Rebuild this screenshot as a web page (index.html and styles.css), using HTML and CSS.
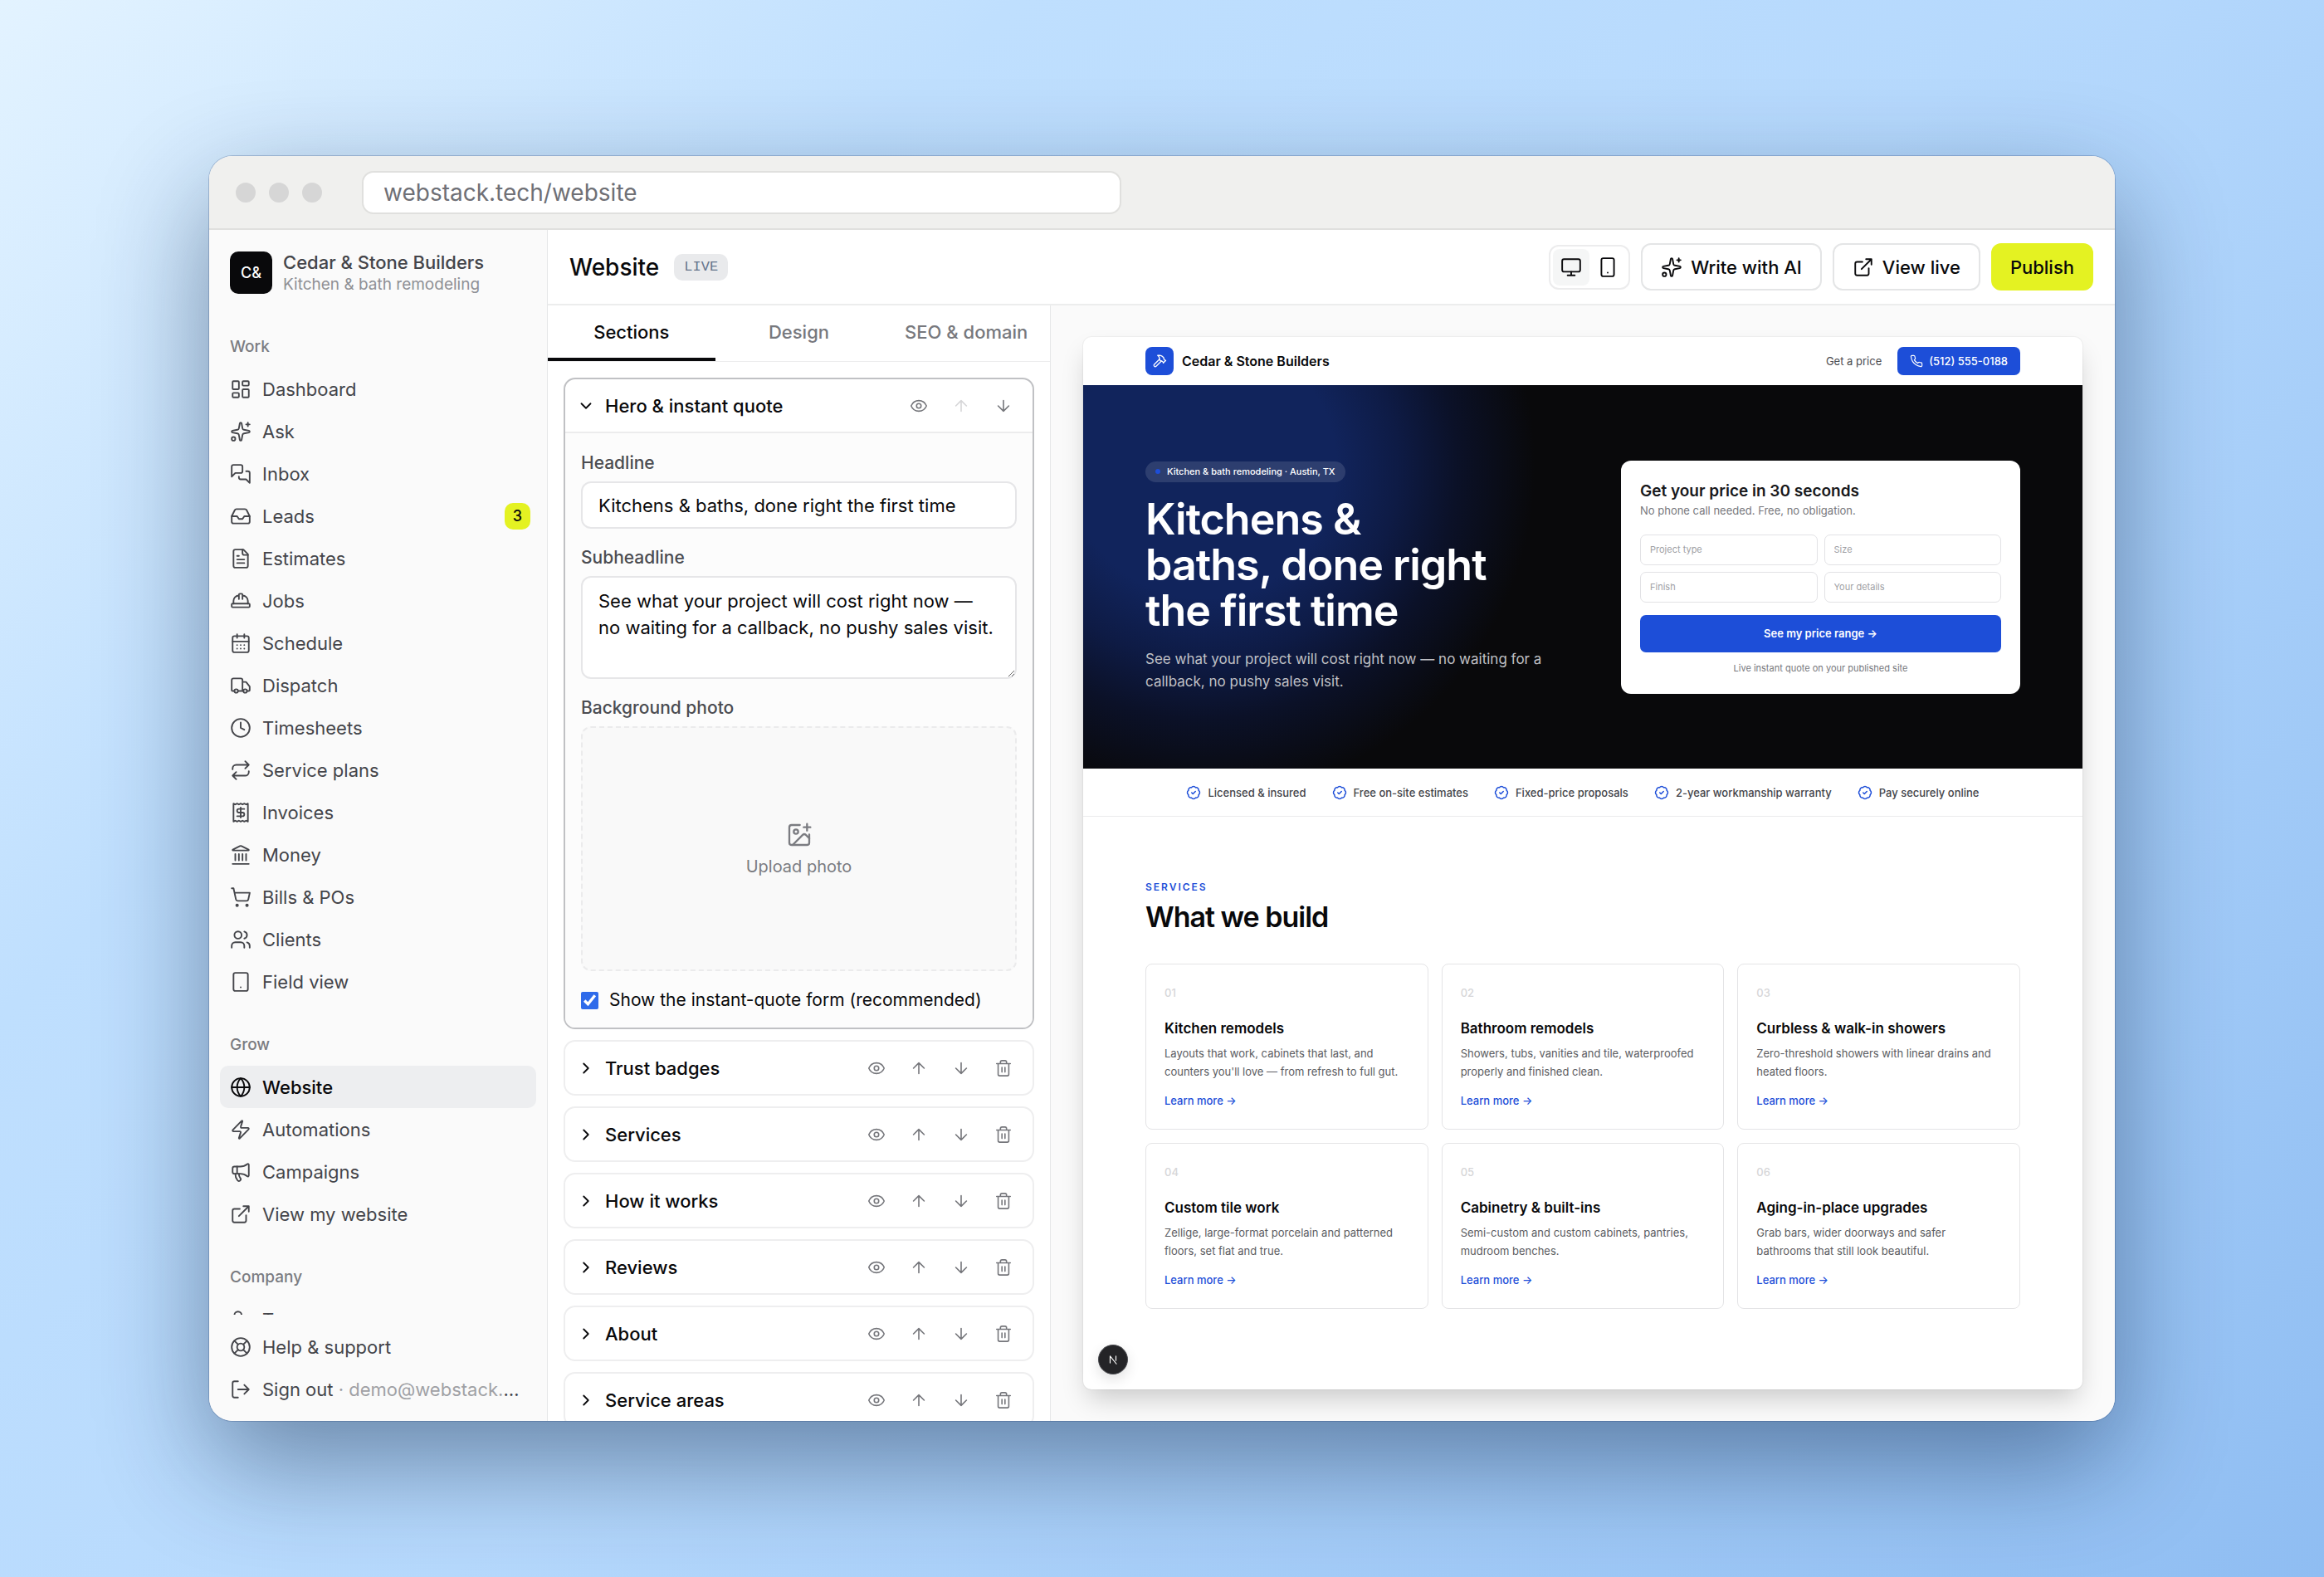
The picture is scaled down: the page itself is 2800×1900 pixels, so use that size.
FILE: index.html
```html
<!DOCTYPE html>
<html lang="en">
<head>
    <meta charset="UTF-8">
    <meta name="viewport" content="width=device-width, initial-scale=1">
    <title>Website - Cedar &amp; Stone Builders</title>
    <link rel="stylesheet" href="styles.css">
</head>
<body>
<!-- icon sprite -->
<svg class="sprite" aria-hidden="true">
    <symbol id="i-dashboard" viewBox="0 0 24 24"><rect x="3" y="3" width="7" height="9" rx="1"/><rect x="14" y="3" width="7" height="5" rx="1"/><rect x="14" y="12" width="7" height="9" rx="1"/><rect x="3" y="16" width="7" height="5" rx="1"/></symbol>
    <symbol id="i-sparkles" viewBox="0 0 24 24"><path d="M11.017 2.814a1 1 0 0 1 1.966 0l1.051 5.558a2 2 0 0 0 1.594 1.594l5.558 1.051a1 1 0 0 1 0 1.966l-5.558 1.051a2 2 0 0 0-1.594 1.594l-1.051 5.558a1 1 0 0 1-1.966 0l-1.051-5.558a2 2 0 0 0-1.594-1.594l-5.558-1.051a1 1 0 0 1 0-1.966l5.558-1.051a2 2 0 0 0 1.594-1.594z"/><path d="M20 2v4M22 4h-4"/><circle cx="4" cy="20" r="2"/></symbol>
    <symbol id="i-messages" viewBox="0 0 24 24"><path d="M14 9a2 2 0 0 1-2 2H6l-4 4V4a2 2 0 0 1 2-2h8a2 2 0 0 1 2 2z"/><path d="M18 9h2a2 2 0 0 1 2 2v11l-4-4h-6a2 2 0 0 1-2-2v-1"/></symbol>
    <symbol id="i-inbox" viewBox="0 0 24 24"><path d="M22 12h-6l-2 3h-4l-2-3H2"/><path d="M5.45 5.11 2 12v6a2 2 0 0 0 2 2h16a2 2 0 0 0 2-2v-6l-3.45-6.89A2 2 0 0 0 16.76 4H7.24a2 2 0 0 0-1.79 1.11z"/></symbol>
    <symbol id="i-file" viewBox="0 0 24 24"><path d="M15 2H6a2 2 0 0 0-2 2v16a2 2 0 0 0 2 2h12a2 2 0 0 0 2-2V7Z"/><path d="M14 2v4a2 2 0 0 0 2 2h4M10 9H8M16 13H8M16 17H8"/></symbol>
    <symbol id="i-hat" viewBox="0 0 24 24"><path d="M10 10V5a1 1 0 0 1 1-1h2a1 1 0 0 1 1 1v5M14 6a6 6 0 0 1 6 6v3M4 15v-3a6 6 0 0 1 6-6"/><rect x="2" y="15" width="20" height="4" rx="1"/></symbol>
    <symbol id="i-calendar" viewBox="0 0 24 24"><path d="M8 2v4M16 2v4"/><rect x="3" y="4" width="18" height="18" rx="2"/><path d="M3 10h18M8 14h.01M12 14h.01M16 14h.01M8 18h.01M12 18h.01M16 18h.01"/></symbol>
    <symbol id="i-truck" viewBox="0 0 24 24"><path d="M14 18V6a2 2 0 0 0-2-2H4a2 2 0 0 0-2 2v11a1 1 0 0 0 1 1h2M15 18H9M19 18h2a1 1 0 0 0 1-1v-3.65a1 1 0 0 0-.22-.624l-3.48-4.35A1 1 0 0 0 17.52 8H14"/><circle cx="17" cy="18" r="2"/><circle cx="7" cy="18" r="2"/></symbol>
    <symbol id="i-clock" viewBox="0 0 24 24"><circle cx="12" cy="12" r="10"/><path d="M12 6v6l4 2"/></symbol>
    <symbol id="i-repeat" viewBox="0 0 24 24"><path d="m17 2 4 4-4 4M3 11v-1a4 4 0 0 1 4-4h14M7 22l-4-4 4-4M21 13v1a4 4 0 0 1-4 4H3"/></symbol>
    <symbol id="i-receipt" viewBox="0 0 24 24"><path d="M4 2v20l2-1 2 1 2-1 2 1 2-1 2 1 2-1 2 1V2l-2 1-2-1-2 1-2-1-2 1-2-1-2 1Z"/><path d="M16 8h-6a2 2 0 1 0 0 4h4a2 2 0 1 1 0 4H8M12 17.5v-11"/></symbol>
    <symbol id="i-bank" viewBox="0 0 24 24"><path d="M11.12 2.198a2 2 0 0 1 1.76.006l7.866 3.847c.476.233.31.949-.22.949H3.474c-.53 0-.695-.716-.22-.949z"/><path d="M6 18v-7M10 18v-7M14 18v-7M18 18v-7M3 22h18"/></symbol>
    <symbol id="i-cart" viewBox="0 0 24 24"><circle cx="8" cy="21" r="1"/><circle cx="19" cy="21" r="1"/><path d="M2.05 2.05h2l2.66 12.42a2 2 0 0 0 2 1.58h9.78a2 2 0 0 0 1.95-1.57l1.65-7.43H5.12"/></symbol>
    <symbol id="i-users" viewBox="0 0 24 24"><path d="M16 21v-2a4 4 0 0 0-4-4H6a4 4 0 0 0-4 4v2"/><circle cx="9" cy="7" r="4"/><path d="M22 21v-2a4 4 0 0 0-3-3.87M16 3.13a4 4 0 0 1 0 7.75"/></symbol>
    <symbol id="i-user" viewBox="0 0 24 24"><path d="M16 21v-2a4 4 0 0 0-4-4H6a4 4 0 0 0-4 4v2"/><circle cx="9" cy="7" r="4"/></symbol>
    <symbol id="i-tablet" viewBox="0 0 24 24"><rect x="4" y="2" width="16" height="20" rx="2"/><path d="M12 18h.01"/></symbol>
    <symbol id="i-phone-device" viewBox="0 0 24 24"><rect x="5" y="2" width="14" height="20" rx="2"/><path d="M12 18h.01"/></symbol>
    <symbol id="i-monitor" viewBox="0 0 24 24"><rect x="2" y="3" width="20" height="14" rx="2"/><path d="M8 21h8M12 17v4"/></symbol>
    <symbol id="i-globe" viewBox="0 0 24 24"><circle cx="12" cy="12" r="10"/><path d="M12 2a14.5 14.5 0 0 0 0 20 14.5 14.5 0 0 0 0-20M2 12h20"/></symbol>
    <symbol id="i-zap" viewBox="0 0 24 24"><path d="M4 14a1 1 0 0 1-.78-1.63l9.9-10.2a.5.5 0 0 1 .86.46l-1.92 6.02A1 1 0 0 0 13 10h7a1 1 0 0 1 .78 1.63l-9.9 10.2a.5.5 0 0 1-.86-.46l1.92-6.02A1 1 0 0 0 11 14z"/></symbol>
    <symbol id="i-megaphone" viewBox="0 0 24 24"><path d="M11 6a13 13 0 0 0 8.4-2.8A1 1 0 0 1 21 4v12a1 1 0 0 1-1.6.8A13 13 0 0 0 11 14H5a2 2 0 0 1-2-2V8a2 2 0 0 1 2-2z"/><path d="M6 14a12 12 0 0 0 2.4 7.2 2 2 0 0 0 3.2-2.4A8 8 0 0 1 10 14M8 6v8"/></symbol>
    <symbol id="i-external" viewBox="0 0 24 24"><path d="M15 3h6v6M10 14 21 3M18 13v6a2 2 0 0 1-2 2H5a2 2 0 0 1-2-2V8a2 2 0 0 1 2-2h6"/></symbol>
    <symbol id="i-help" viewBox="0 0 24 24"><circle cx="12" cy="12" r="10"/><path d="m4.93 4.93 4.24 4.24M14.83 9.17l4.24-4.24M14.83 14.83l4.24 4.24M9.17 14.83l-4.24 4.24"/><circle cx="12" cy="12" r="4"/></symbol>
    <symbol id="i-logout" viewBox="0 0 24 24"><path d="m16 17 5-5-5-5M21 12H9M9 21H5a2 2 0 0 1-2-2V5a2 2 0 0 1 2-2h4"/></symbol>
    <symbol id="i-eye" viewBox="0 0 24 24"><path d="M2.062 12.348a1 1 0 0 1 0-.696 10.75 10.75 0 0 1 19.876 0 1 1 0 0 1 0 .696 10.75 10.75 0 0 1-19.876 0"/><circle cx="12" cy="12" r="3"/></symbol>
    <symbol id="i-up" viewBox="0 0 24 24"><path d="m5 12 7-7 7 7M12 19V5"/></symbol>
    <symbol id="i-down" viewBox="0 0 24 24"><path d="M12 5v14M19 12l-7 7-7-7"/></symbol>
    <symbol id="i-trash" viewBox="0 0 24 24"><path d="M3 6h18M19 6v14a2 2 0 0 1-2 2H7a2 2 0 0 1-2-2V6M8 6V4a2 2 0 0 1 2-2h4a2 2 0 0 1 2 2v2M10 11v6M14 11v6"/></symbol>
    <symbol id="i-chevron-down" viewBox="0 0 24 24"><path d="m6 9 6 6 6-6"/></symbol>
    <symbol id="i-chevron-right" viewBox="0 0 24 24"><path d="m9 18 6-6-6-6"/></symbol>
    <symbol id="i-image-plus" viewBox="0 0 24 24"><path d="M16 5h6M19 2v6M21 11.5V19a2 2 0 0 1-2 2H5a2 2 0 0 1-2-2V5a2 2 0 0 1 2-2h7.5"/><path d="m21 15-3.086-3.086a2 2 0 0 0-2.828 0L6 21"/><circle cx="9" cy="9" r="2"/></symbol>
    <symbol id="i-hammer" viewBox="0 0 24 24"><path d="m15 12-8.373 8.373a1 1 0 1 1-3-3L12 9M18 15l4-4"/><path d="m21.5 11.5-1.914-1.914A2 2 0 0 1 19 8.172V7l-2.26-2.26a6 6 0 0 0-4.202-1.756L9 2.96l.92.82A6.18 6.18 0 0 1 12 8.4V10l2 2h1.172a2 2 0 0 1 1.414.586L18.5 14.5"/></symbol>
    <symbol id="i-call" viewBox="0 0 24 24"><path d="M22 16.92v3a2 2 0 0 1-2.18 2 19.79 19.79 0 0 1-8.63-3.07 19.5 19.5 0 0 1-6-6 19.79 19.79 0 0 1-3.07-8.67A2 2 0 0 1 4.11 2h3a2 2 0 0 1 2 1.72 12.84 12.84 0 0 0 .7 2.81 2 2 0 0 1-.45 2.11L8.09 9.91a16 16 0 0 0 6 6l1.27-1.27a2 2 0 0 1 2.11-.45 12.84 12.84 0 0 0 2.81.7A2 2 0 0 1 22 16.92z"/></symbol>
    <symbol id="i-badge-check" viewBox="0 0 24 24"><path d="M3.85 8.62a4 4 0 0 1 4.78-4.77 4 4 0 0 1 6.74 0 4 4 0 0 1 4.78 4.78 4 4 0 0 1 0 6.74 4 4 0 0 1-4.77 4.78 4 4 0 0 1-6.75 0 4 4 0 0 1-4.78-4.77 4 4 0 0 1 0-6.76Z"/><path d="m9 12 2 2 4-4"/></symbol>
</svg>

<div class="browser">
    <div class="browser-bar">
        <div class="dots"><span></span><span></span><span></span></div>
        <input class="address" type="text" value="webstack.tech/website" aria-label="Address">
    </div>

    <div class="app">
        <aside class="sidebar">
            <div class="account">
                <div class="avatar">C&amp;</div>
                <div class="account-text">
                    <div class="account-name">Cedar &amp; Stone Builders</div>
                    <div class="account-sub">Kitchen &amp; bath remodeling</div>
                </div>
            </div>

            <nav class="nav">
                <div class="nav-group">
                    <div class="nav-label">Work</div>
                    <a class="nav-item" href="#"><svg class="icon"><use href="#i-dashboard"/></svg>Dashboard</a>
                    <a class="nav-item" href="#"><svg class="icon"><use href="#i-sparkles"/></svg>Ask</a>
                    <a class="nav-item" href="#"><svg class="icon"><use href="#i-messages"/></svg>Inbox</a>
                    <a class="nav-item" href="#"><svg class="icon"><use href="#i-inbox"/></svg>Leads<span class="count">3</span></a>
                    <a class="nav-item" href="#"><svg class="icon"><use href="#i-file"/></svg>Estimates</a>
                    <a class="nav-item" href="#"><svg class="icon"><use href="#i-hat"/></svg>Jobs</a>
                    <a class="nav-item" href="#"><svg class="icon"><use href="#i-calendar"/></svg>Schedule</a>
                    <a class="nav-item" href="#"><svg class="icon"><use href="#i-truck"/></svg>Dispatch</a>
                    <a class="nav-item" href="#"><svg class="icon"><use href="#i-clock"/></svg>Timesheets</a>
                    <a class="nav-item" href="#"><svg class="icon"><use href="#i-repeat"/></svg>Service plans</a>
                    <a class="nav-item" href="#"><svg class="icon"><use href="#i-receipt"/></svg>Invoices</a>
                    <a class="nav-item" href="#"><svg class="icon"><use href="#i-bank"/></svg>Money</a>
                    <a class="nav-item" href="#"><svg class="icon"><use href="#i-cart"/></svg>Bills &amp; POs</a>
                    <a class="nav-item" href="#"><svg class="icon"><use href="#i-users"/></svg>Clients</a>
                    <a class="nav-item" href="#"><svg class="icon"><use href="#i-tablet"/></svg>Field view</a>
                </div>
                <div class="nav-group">
                    <div class="nav-label">Grow</div>
                    <a class="nav-item active" href="#"><svg class="icon"><use href="#i-globe"/></svg>Website</a>
                    <a class="nav-item" href="#"><svg class="icon"><use href="#i-zap"/></svg>Automations</a>
                    <a class="nav-item" href="#"><svg class="icon"><use href="#i-megaphone"/></svg>Campaigns</a>
                    <a class="nav-item" href="#"><svg class="icon"><use href="#i-external"/></svg>View my website</a>
                </div>
                <div class="nav-group">
                    <div class="nav-label">Company</div>
                    <a class="nav-item" href="#"><svg class="icon"><use href="#i-user"/></svg>Team</a>
                </div>
            </nav>

            <div class="nav-footer">
                <a class="nav-item" href="#"><svg class="icon"><use href="#i-help"/></svg>Help &amp; support</a>
                <button class="nav-item" type="button"><svg class="icon"><use href="#i-logout"/></svg><span class="sign-out">Sign out <span class="muted">· demo@webstack.tech</span></span></button>
            </div>
        </aside>

        <main class="main">
            <header class="topbar">
                <h1 class="title">Website</h1>
                <span class="status">LIVE</span>
                <div class="actions">
                    <div class="devices">
                        <button class="device on" type="button" aria-label="Desktop"><svg class="icon"><use href="#i-monitor"/></svg></button>
                        <button class="device" type="button" aria-label="Mobile"><svg class="icon"><use href="#i-phone-device"/></svg></button>
                    </div>
                    <button class="btn" type="button"><svg class="icon"><use href="#i-sparkles"/></svg>Write with AI</button>
                    <a class="btn" href="#"><svg class="icon"><use href="#i-external"/></svg>View live</a>
                    <button class="btn btn-primary" type="button">Publish</button>
                </div>
            </header>

            <div class="workspace">
                <section class="editor">
                    <div class="tabs">
                        <button class="tab on" type="button">Sections</button>
                        <button class="tab" type="button">Design</button>
                        <button class="tab" type="button">SEO &amp; domain</button>
                    </div>
                    <div class="sections">
                        <div class="section open">
                            <div class="section-head">
                                <button class="section-toggle" type="button"><svg class="icon-sm"><use href="#i-chevron-down"/></svg>Hero &amp; instant quote</button>
                                <button class="tool" type="button" aria-label="Hide"><svg class="icon-sm"><use href="#i-eye"/></svg></button>
                                <button class="tool" type="button" aria-label="Move up" disabled><svg class="icon-sm"><use href="#i-up"/></svg></button>
                                <button class="tool" type="button" aria-label="Move down"><svg class="icon-sm"><use href="#i-down"/></svg></button>
                            </div>
                            <div class="section-body">
                                <label class="label" for="headline">Headline</label>
                                <input class="field" id="headline" type="text" value="Kitchens &amp; baths, done right the first time">
                                <label class="label" for="subheadline">Subheadline</label>
                                <textarea class="field area" id="subheadline">See what your project will cost right now — no waiting for a callback, no pushy sales visit.</textarea>
                                <div class="label">Background photo</div>
                                <button class="upload" type="button"><svg class="icon-lg"><use href="#i-image-plus"/></svg>Upload photo</button>
                                <label class="check"><input type="checkbox" checked>Show the instant-quote form (recommended)</label>
                            </div>
                        </div>
                        <div class="section">
                            <div class="section-head">
                                <button class="section-toggle" type="button"><svg class="icon-sm"><use href="#i-chevron-right"/></svg>Trust badges</button>
                                <button class="tool" type="button" aria-label="Hide"><svg class="icon-sm"><use href="#i-eye"/></svg></button>
                                <button class="tool" type="button" aria-label="Move up"><svg class="icon-sm"><use href="#i-up"/></svg></button>
                                <button class="tool" type="button" aria-label="Move down"><svg class="icon-sm"><use href="#i-down"/></svg></button>
                                <button class="tool" type="button" aria-label="Delete"><svg class="icon-sm"><use href="#i-trash"/></svg></button>
                            </div>
                        </div>
                        <div class="section">
                            <div class="section-head">
                                <button class="section-toggle" type="button"><svg class="icon-sm"><use href="#i-chevron-right"/></svg>Services</button>
                                <button class="tool" type="button" aria-label="Hide"><svg class="icon-sm"><use href="#i-eye"/></svg></button>
                                <button class="tool" type="button" aria-label="Move up"><svg class="icon-sm"><use href="#i-up"/></svg></button>
                                <button class="tool" type="button" aria-label="Move down"><svg class="icon-sm"><use href="#i-down"/></svg></button>
                                <button class="tool" type="button" aria-label="Delete"><svg class="icon-sm"><use href="#i-trash"/></svg></button>
                            </div>
                        </div>
                        <div class="section">
                            <div class="section-head">
                                <button class="section-toggle" type="button"><svg class="icon-sm"><use href="#i-chevron-right"/></svg>How it works</button>
                                <button class="tool" type="button" aria-label="Hide"><svg class="icon-sm"><use href="#i-eye"/></svg></button>
                                <button class="tool" type="button" aria-label="Move up"><svg class="icon-sm"><use href="#i-up"/></svg></button>
                                <button class="tool" type="button" aria-label="Move down"><svg class="icon-sm"><use href="#i-down"/></svg></button>
                                <button class="tool" type="button" aria-label="Delete"><svg class="icon-sm"><use href="#i-trash"/></svg></button>
                            </div>
                        </div>
                        <div class="section">
                            <div class="section-head">
                                <button class="section-toggle" type="button"><svg class="icon-sm"><use href="#i-chevron-right"/></svg>Reviews</button>
                                <button class="tool" type="button" aria-label="Hide"><svg class="icon-sm"><use href="#i-eye"/></svg></button>
                                <button class="tool" type="button" aria-label="Move up"><svg class="icon-sm"><use href="#i-up"/></svg></button>
                                <button class="tool" type="button" aria-label="Move down"><svg class="icon-sm"><use href="#i-down"/></svg></button>
                                <button class="tool" type="button" aria-label="Delete"><svg class="icon-sm"><use href="#i-trash"/></svg></button>
                            </div>
                        </div>
                        <div class="section">
                            <div class="section-head">
                                <button class="section-toggle" type="button"><svg class="icon-sm"><use href="#i-chevron-right"/></svg>About</button>
                                <button class="tool" type="button" aria-label="Hide"><svg class="icon-sm"><use href="#i-eye"/></svg></button>
                                <button class="tool" type="button" aria-label="Move up"><svg class="icon-sm"><use href="#i-up"/></svg></button>
                                <button class="tool" type="button" aria-label="Move down"><svg class="icon-sm"><use href="#i-down"/></svg></button>
                                <button class="tool" type="button" aria-label="Delete"><svg class="icon-sm"><use href="#i-trash"/></svg></button>
                            </div>
                        </div>
                        <div class="section">
                            <div class="section-head">
                                <button class="section-toggle" type="button"><svg class="icon-sm"><use href="#i-chevron-right"/></svg>Service areas</button>
                                <button class="tool" type="button" aria-label="Hide"><svg class="icon-sm"><use href="#i-eye"/></svg></button>
                                <button class="tool" type="button" aria-label="Move up"><svg class="icon-sm"><use href="#i-up"/></svg></button>
                                <button class="tool" type="button" aria-label="Move down"><svg class="icon-sm"><use href="#i-down"/></svg></button>
                                <button class="tool" type="button" aria-label="Delete"><svg class="icon-sm"><use href="#i-trash"/></svg></button>
                            </div>
                        </div>
                    </div>
                </section>

                <section class="preview">
                    <div class="site">
                        <div class="site-head">
                            <div class="site-logo"><svg><use href="#i-hammer"/></svg></div>
                            <div class="site-name">Cedar &amp; Stone Builders</div>
                            <a class="site-link" href="#">Get a price</a>
                            <a class="site-call" href="#"><svg><use href="#i-call"/></svg>(512) 555-0188</a>
                        </div>

                        <div class="hero">
                            <div class="hero-text">
                                <div class="pill"><span class="pill-dot"></span>Kitchen &amp; bath remodeling · Austin, TX</div>
                                <h2 class="hero-title">Kitchens &amp;<br>baths, done right<br>the first time</h2>
                                <p class="hero-sub">See what your project will cost right now — no waiting for a callback, no pushy sales visit.</p>
                            </div>
                            <form class="quote">
                                <h3 class="quote-title">Get your price in 30 seconds</h3>
                                <p class="quote-sub">No phone call needed. Free, no obligation.</p>
                                <div class="quote-grid">
                                    <input type="text" placeholder="Project type" aria-label="Project type">
                                    <input type="text" placeholder="Size" aria-label="Size">
                                    <input type="text" placeholder="Finish" aria-label="Finish">
                                    <input type="text" placeholder="Your details" aria-label="Your details">
                                </div>
                                <button class="quote-btn" type="button">See my price range →</button>
                                <p class="quote-note">Live instant quote on your published site</p>
                            </form>
                        </div>

                        <ul class="trust">
                            <li><svg><use href="#i-badge-check"/></svg>Licensed &amp; insured</li>
                            <li><svg><use href="#i-badge-check"/></svg>Free on-site estimates</li>
                            <li><svg><use href="#i-badge-check"/></svg>Fixed-price proposals</li>
                            <li><svg><use href="#i-badge-check"/></svg>2-year workmanship warranty</li>
                            <li><svg><use href="#i-badge-check"/></svg>Pay securely online</li>
                        </ul>

                        <div class="services">
                            <div class="eyebrow">SERVICES</div>
                            <h2 class="services-title">What we build</h2>
                            <div class="cards">
                                <article class="card">
                                    <div class="card-num">01</div>
                                    <h3>Kitchen remodels</h3>
                                    <p>Layouts that work, cabinets that last, and counters you'll love — from refresh to full gut.</p>
                                    <a href="#">Learn more →</a>
                                </article>
                                <article class="card">
                                    <div class="card-num">02</div>
                                    <h3>Bathroom remodels</h3>
                                    <p>Showers, tubs, vanities and tile, waterproofed properly and finished clean.</p>
                                    <a href="#">Learn more →</a>
                                </article>
                                <article class="card">
                                    <div class="card-num">03</div>
                                    <h3>Curbless &amp; walk-in showers</h3>
                                    <p>Zero-threshold showers with linear drains and heated floors.</p>
                                    <a href="#">Learn more →</a>
                                </article>
                                <article class="card">
                                    <div class="card-num">04</div>
                                    <h3>Custom tile work</h3>
                                    <p>Zellige, large-format porcelain and patterned floors, set flat and true.</p>
                                    <a href="#">Learn more →</a>
                                </article>
                                <article class="card">
                                    <div class="card-num">05</div>
                                    <h3>Cabinetry &amp; built-ins</h3>
                                    <p>Semi-custom and custom cabinets, pantries, mudroom benches.</p>
                                    <a href="#">Learn more →</a>
                                </article>
                                <article class="card">
                                    <div class="card-num">06</div>
                                    <h3>Aging-in-place upgrades</h3>
                                    <p>Grab bars, wider doorways and safer bathrooms that still look beautiful.</p>
                                    <a href="#">Learn more →</a>
                                </article>
                            </div>
                        </div>
                        <button class="dev-badge" type="button" aria-label="Dev tools"><svg viewBox="0 0 24 24"><path d="M6 19V5l13 16M18 5v9"/></svg></button>
                    </div>
                </section>
            </div>
        </main>
    </div>
</div>
</body>
</html>
```
FILE: styles.css
```css
* {
    margin: 0;
    padding: 0;
    box-sizing: border-box;
}
body {
    display: flex;
    height: 100vh;
    padding: 188px 9%;
    background: linear-gradient(135deg, #e3f3ff 0%, #bfdffe 26%, #b6d9fd 52%, #8fbdf2 100%);
    font-family: Inter, "Liberation Sans", sans-serif;
    font-size: 22px;
    color: #09090b;
}
a {
    color: inherit;
    text-decoration: none;
}
button, input, textarea {
    font: inherit;
    color: inherit;
}
button {
    border: 0;
    background: none;
    cursor: pointer;
}
ul {
    list-style: none;
}
svg {
    flex: none;
    fill: none;
    stroke: currentColor;
    stroke-width: 1.75;
    stroke-linecap: round;
    stroke-linejoin: round;
}
.sprite {
    display: none;
}
.icon {
    width: 26px;
    height: 26px;
}
.icon-sm {
    width: 22px;
    height: 22px;
}
.icon-lg {
    width: 32px;
    height: 32px;
}

/* browser window */
.browser {
    flex: 1;
    display: flex;
    flex-direction: column;
    min-width: 0;
    border-radius: 28px;
    background: #fff;
    overflow: hidden;
    box-shadow: 0 0 0 1px rgba(30, 60, 110, .25), 0 50px 130px rgba(10, 35, 70, .46);
}
.browser-bar {
    flex: none;
    display: flex;
    align-items: center;
    gap: 48px;
    height: 89px;
    padding: 0 32px;
    background: #f0f0ee;
    border-bottom: 2px solid #e0e0de;
}
.dots {
    display: flex;
    gap: 16px;
}
.dots span {
    width: 24px;
    height: 24px;
    border-radius: 50%;
    background: #d6d6d6;
}
.address {
    width: 41%;
    height: 52px;
    padding: 0 24px;
    border: 2px solid #e0e0de;
    border-radius: 14px;
    background: #fff;
    color: #6f7076;
    font-size: 28px;
}
.app {
    flex: 1;
    display: flex;
    min-height: 0;
}

/* sidebar */
.sidebar {
    flex: none;
    display: flex;
    flex-direction: column;
    width: 408px;
    border-right: 1px solid #e6e7e8;
    background: #fafafa;
    color: #44454a;
}
.account {
    display: flex;
    align-items: center;
    gap: 13px;
    padding: 25px 25px 37px;
}
.avatar {
    width: 51px;
    height: 51px;
    border-radius: 10px;
    background: #09090b;
    color: #fff;
    font-size: 18px;
    font-weight: 500;
    line-height: 51px;
    text-align: center;
}
.account-name {
    font-weight: 500;
    line-height: 28px;
}
.account-sub {
    font-size: 19px;
    line-height: 25px;
    color: #8f9095;
}
.nav {
    flex: 1;
    display: flex;
    flex-direction: column;
    gap: 25px;
    min-height: 0;
    padding: 0 13px;
    overflow: hidden;
}
.nav-label {
    padding: 0 12px;
    font-size: 19px;
    font-weight: 500;
    line-height: 51px;
    color: #7b7c81;
}
.nav-item {
    display: flex;
    align-items: center;
    gap: 13px;
    width: 100%;
    height: 51px;
    padding: 0 16px 0 12px;
    border-radius: 10px;
    text-align: left;
}
.nav-item.active {
    background: #edeef0;
    color: #09090b;
    font-weight: 500;
}
.count {
    min-width: 31px;
    margin-left: auto;
    margin-right: -9px;
    border-radius: 10px;
    background: #e4f222;
    color: #09090b;
    font-size: 18px;
    font-weight: 500;
    line-height: 32px;
    text-align: center;
}
.nav-footer {
    padding: 13px;
}
.sign-out {
    overflow: hidden;
    text-overflow: ellipsis;
    white-space: nowrap;
}
.muted {
    color: #a0a1a5;
}

/* top bar */
.main {
    flex: 1;
    display: flex;
    flex-direction: column;
    min-width: 0;
}
.topbar {
    flex: none;
    display: flex;
    align-items: center;
    gap: 18px;
    height: 91px;
    padding: 0 26px;
    border-bottom: 2px solid #eceded;
}
.title {
    font-size: 28px;
    font-weight: 500;
}
.status {
    padding: 0 12px;
    border-radius: 10px;
    background: #e9eaec;
    color: #64748b;
    font-family: "Liberation Mono", monospace;
    font-size: 17px;
    line-height: 32px;
}
.actions {
    display: flex;
    align-items: center;
    gap: 13px;
    margin-left: auto;
}
.devices {
    display: flex;
    padding: 3px;
    border: 2px solid #ececed;
    border-radius: 12px;
}
.device {
    display: flex;
    align-items: center;
    justify-content: center;
    width: 44px;
    height: 44px;
    border-radius: 8px;
}
.device.on {
    background: #f5f6f6;
}
.btn {
    display: flex;
    align-items: center;
    gap: 10px;
    height: 57px;
    padding: 0 22px;
    border: 2px solid #e4e5e6;
    border-radius: 12px;
    font-weight: 500;
}
.btn-primary {
    padding: 0 21px;
    border-color: #e4f222;
    background: #e4f222;
}

/* editor */
.workspace {
    flex: 1;
    display: flex;
    min-height: 0;
}
.editor {
    flex: none;
    display: flex;
    flex-direction: column;
    width: 606px;
    border-right: 1px solid #e6e7e8;
    overflow: hidden;
}
.tabs {
    flex: none;
    display: flex;
    height: 68px;
    border-bottom: 1px solid #ececed;
}
.tab {
    flex: 1;
    border-bottom: 4px solid transparent;
    color: #77787d;
    font-weight: 500;
    white-space: nowrap;
}
.tab.on {
    border-color: #09090b;
    color: #09090b;
}
.sections {
    display: flex;
    flex-direction: column;
    gap: 13px;
    padding: 19px;
}
.section {
    flex: none;
    border: 2px solid #eeeeef;
    border-radius: 14px;
    overflow: hidden;
}
.section.open {
    border-color: #c0c1c4;
}
.section-head {
    display: flex;
    align-items: center;
    gap: 6px;
    height: 63px;
    padding: 0 13px 0 14px;
}
.section-toggle {
    flex: 1;
    display: flex;
    align-items: center;
    gap: 12px;
    font-weight: 500;
    text-align: left;
}
.section-toggle svg {
    stroke-width: 2;
}
.tool {
    display: flex;
    align-items: center;
    justify-content: center;
    width: 45px;
    height: 45px;
    color: #75767b;
}
.tool:disabled {
    color: #d6d6d8;
}
.section-body {
    display: flex;
    flex-direction: column;
    padding: 20px 19px 17px;
    border-top: 2px solid #ececed;
    background: #fcfcfc;
}
.label {
    margin-bottom: 6px;
    font-size: 21px;
    font-weight: 500;
    line-height: 32px;
    color: #4b4c51;
}
.field {
    height: 57px;
    margin-bottom: 19px;
    padding: 0 19px;
    border: 2px solid #e6e6e8;
    border-radius: 12px;
    background: #fff;
}
.area {
    height: 124px;
    padding: 12px 24px 12px 19px;
    line-height: 32px;
    resize: vertical;
}
.upload {
    display: flex;
    flex-direction: column;
    align-items: center;
    justify-content: center;
    gap: 10px;
    aspect-ratio: 16 / 9;
    border: 2px dashed #ebebec;
    border-radius: 12px;
    background: #f9f9f9;
    color: #7b7c81;
    font-size: 20px;
}
.check {
    display: flex;
    align-items: center;
    gap: 13px;
    padding: 19px 0 0;
    font-size: 21px;
    line-height: 32px;
}
.check input {
    width: 21px;
    height: 21px;
    accent-color: #2f6bea;
}

/* site preview */
.preview {
    flex: 1;
    display: flex;
    min-width: 0;
    padding: 38px 39px;
    background: #fafafa;
}
.site {
    position: relative;
    flex: 1;
    min-width: 0;
    border-radius: 10px;
    background: #fff;
    overflow: hidden;
    box-shadow: 0 0 0 1px rgba(0, 0, 0, .04), 0 16px 32px -6px rgba(0, 0, 0, .2);
}
.site-head {
    display: flex;
    align-items: center;
    height: 58px;
    padding: 0 75px;
}
.site-logo {
    display: flex;
    align-items: center;
    justify-content: center;
    width: 34px;
    height: 34px;
    border-radius: 8px;
    background: #1d4ed8;
    color: #fff;
}
.site-logo svg {
    width: 18px;
    height: 18px;
}
.site-name {
    margin-left: 10px;
    font-size: 16px;
    font-weight: 600;
}
.site-link {
    margin-left: auto;
    font-size: 13px;
    color: #4b4c51;
}
.site-call {
    display: flex;
    align-items: center;
    gap: 7px;
    height: 34px;
    margin-left: 19px;
    padding: 0 15px;
    border-radius: 7px;
    background: #1d4ed8;
    color: #fff;
    font-size: 13px;
    font-weight: 500;
}
.site-call svg {
    width: 16px;
    height: 16px;
}
.hero {
    display: flex;
    align-items: center;
    justify-content: space-between;
    height: 462px;
    padding: 0 75px;
    background: radial-gradient(circle at 12% 21%, #11245c 0, #11245c 160px, #0e1b45 235px, #0b1128 305px, #09090b 400px);
    color: #fff;
}
.pill {
    display: flex;
    align-items: center;
    gap: 8px;
    width: fit-content;
    padding: 0 12px;
    border-radius: 13px;
    background: rgba(255, 255, 255, .12);
    font-size: 11px;
    font-weight: 500;
    line-height: 25px;
}
.pill-dot {
    width: 6px;
    height: 6px;
    border-radius: 50%;
    background: #1d4ed8;
}
.hero-title {
    margin-top: 17px;
    font-size: 52px;
    font-weight: 600;
    line-height: 55px;
    letter-spacing: -1px;
}
.hero-sub {
    max-width: 480px;
    margin-top: 18px;
    color: #c0c1c6;
    font-size: 17px;
    line-height: 27px;
}
.quote {
    width: 481px;
    padding: 23px 23px 22px;
    border-radius: 12px;
    background: #fff;
    color: #18181b;
}
.quote-title {
    font-size: 19px;
    font-weight: 600;
    line-height: 27px;
}
.quote-sub {
    margin-bottom: 18px;
    font-size: 13px;
    line-height: 21px;
    color: #77787d;
}
.quote-grid {
    display: grid;
    grid-template-columns: 1fr 1fr;
    gap: 8px;
}
.quote-grid input {
    min-width: 0;
    height: 37px;
    padding: 0 11px;
    border: 1px solid #e2e2e5;
    border-radius: 7px;
    font-size: 11px;
}
.quote-grid input::placeholder {
    color: #a0a1a5;
}
.quote-btn {
    display: block;
    width: 100%;
    height: 45px;
    margin-top: 15px;
    border-radius: 7px;
    background: #1d4ed8;
    color: #fff;
    font-size: 13px;
    font-weight: 600;
}
.quote-note {
    margin-top: 10px;
    font-size: 11px;
    line-height: 18px;
    color: #77787d;
    text-align: center;
}
.trust {
    display: flex;
    align-items: center;
    justify-content: center;
    gap: 31px;
    height: 58px;
    border-bottom: 1px solid #ececed;
    color: #44454a;
    font-size: 13px;
    font-weight: 500;
}
.trust li {
    display: flex;
    align-items: center;
    gap: 8px;
}
.trust svg {
    width: 18px;
    height: 18px;
    color: #1d4ed8;
    stroke-width: 2;
}
.services {
    padding: 75px 75px 0;
}
.eyebrow {
    font-size: 12px;
    font-weight: 600;
    line-height: 20px;
    letter-spacing: 2px;
    color: #1d4ed8;
}
.services-title {
    margin-top: 4px;
    font-size: 34px;
    font-weight: 600;
    line-height: 43px;
    letter-spacing: -1px;
}
.cards {
    display: grid;
    grid-template-columns: repeat(3, 1fr);
    gap: 16px;
    margin-top: 35px;
}
.card {
    display: flex;
    flex-direction: column;
    padding: 23px 22px;
    border: 1px solid #e4e4e6;
    border-radius: 8px;
    font-size: 13px;
}
.card-num {
    font-weight: 500;
    line-height: 22px;
    color: #d6d6d8;
}
.card h3 {
    margin-top: 20px;
    font-size: 17px;
    font-weight: 600;
    line-height: 24px;
}
.card p {
    margin-top: 7px;
    line-height: 22px;
    color: #5b5c61;
}
.card a {
    margin-top: 13px;
    font-weight: 500;
    line-height: 22px;
    color: #1d4ed8;
}
.dev-badge {
    position: absolute;
    left: 18px;
    bottom: 18px;
    display: flex;
    align-items: center;
    justify-content: center;
    width: 36px;
    height: 36px;
    border: 1px solid #4b4c51;
    border-radius: 50%;
    background: #242427;
    color: #fff;
    box-shadow: 0 6px 16px rgba(0, 0, 0, .12);
}
.dev-badge svg {
    width: 14px;
    height: 14px;
    stroke-width: 2;
}
```
